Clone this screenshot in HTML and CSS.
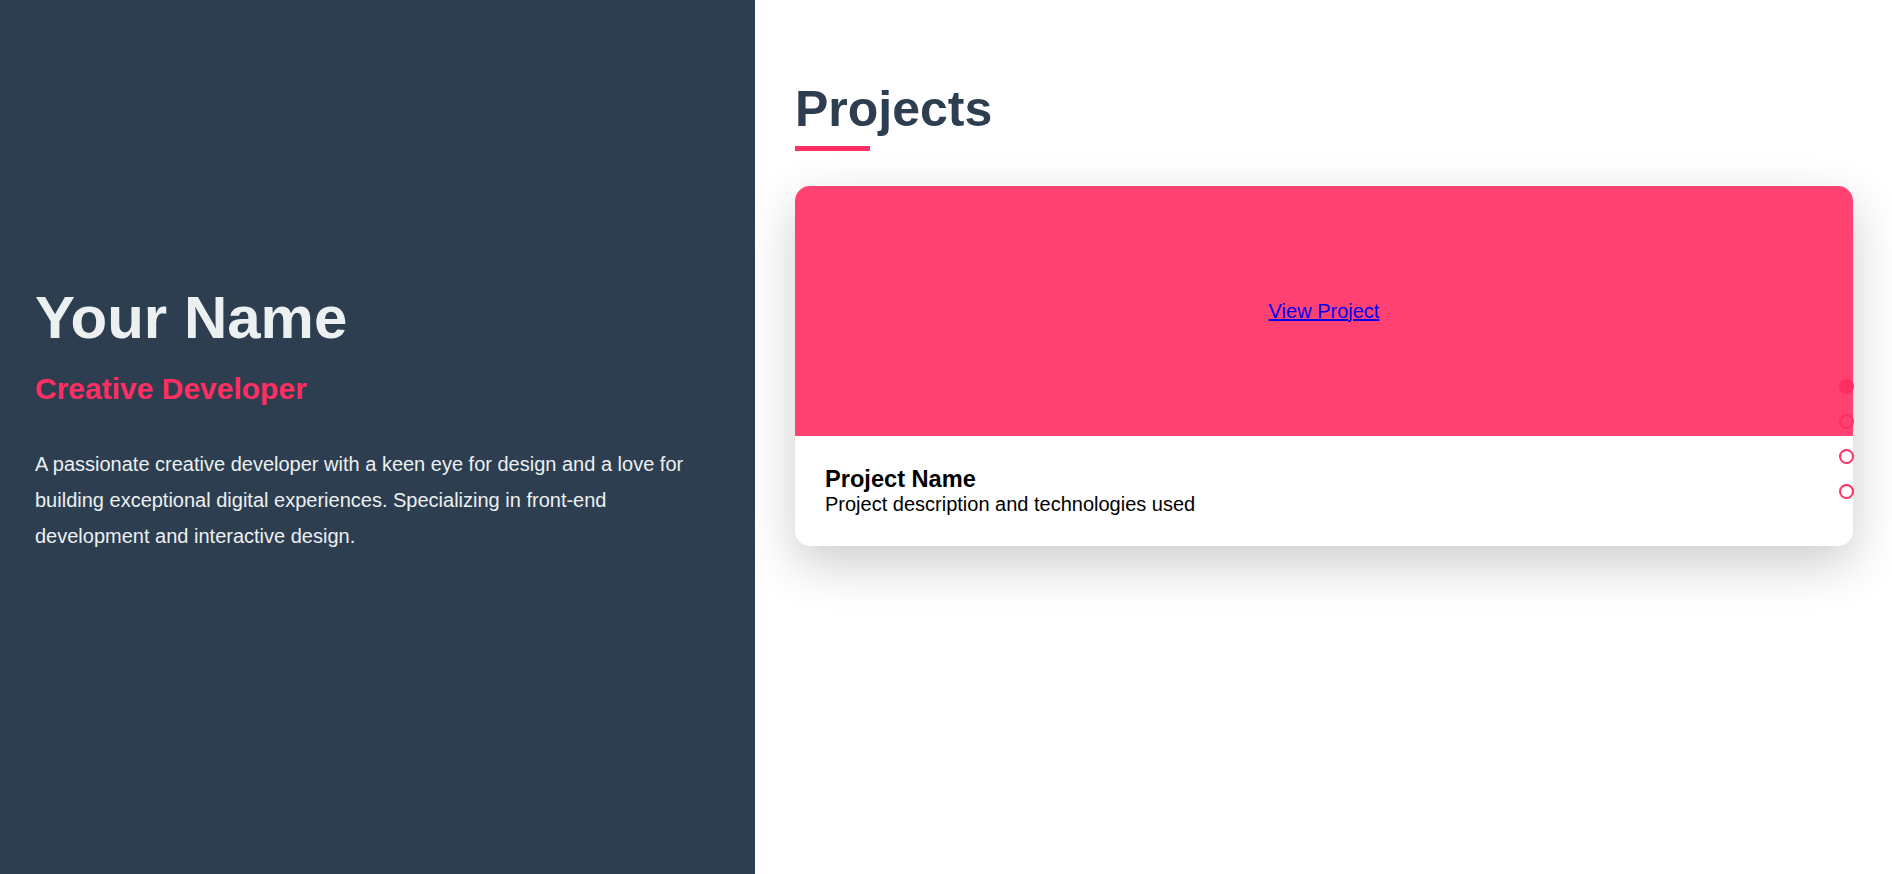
FILE: index.html
```html
<!DOCTYPE html>
<html lang="en">
<head>
<meta charset="utf-8">
<title>Your Name - Portfolio</title>
<link rel="stylesheet" href="styles.css">
</head>
<body>
<div class="layout">
  <aside class="intro">
    <h1 class="intro-name">Your Name</h1>
    <h2 class="intro-role">Creative Developer</h2>
    <p class="intro-text">A passionate creative developer with a keen eye for design and a love for building exceptional digital experiences. Specializing in front-end development and interactive design.</p>
  </aside>
  <main class="projects">
    <h2 class="projects-title">Projects</h2>
    <div class="projects-rule"></div>
    <article class="card">
      <div class="card-media"><a href="#" class="card-link">View Project</a></div>
      <div class="card-body">
        <h3 class="card-title">Project Name</h3>
        <p class="card-desc">Project description and technologies used</p>
      </div>
    </article>
  </main>
</div>
<nav class="dots">
  <span class="dot dot-active"></span>
  <span class="dot"></span>
  <span class="dot"></span>
  <span class="dot"></span>
</nav>
</body>
</html>
```
FILE: styles.css
```css
html, body {
  margin: 0;
  padding: 0;
  height: 100%;
}
body {
  font-family: "Liberation Sans", Arial, sans-serif;
  background: #ffffff;
  overflow: hidden;
}
.layout {
  display: flex;
  height: 874px;
}
.intro {
  width: 755px;
  flex: none;
  box-sizing: border-box;
  background: #2d3e50;
  padding: 0 35px;
  display: flex;
  flex-direction: column;
  justify-content: center;
  color: #ecf0f1;
}
.intro-name {
  margin: 0;
  font-size: 60px;
  line-height: 1.2;
  font-weight: 700;
  color: #ecf0f1;
}
.intro-role {
  margin: 17px 0 0;
  font-size: 30px;
  line-height: 1.2;
  font-weight: 700;
  color: #ff2e63;
}
.intro-text {
  margin: 39px 0 38px;
  font-size: 20px;
  line-height: 1.8;
  color: #ecf0f1;
}
.projects {
  flex: 1;
  box-sizing: border-box;
  padding: 79px 39px 40px 40px;
}
.projects-title {
  margin: 0;
  font-size: 50px;
  line-height: 1.2;
  font-weight: 700;
  color: #2c3e50;
}
.projects-rule {
  margin-top: 7px;
  width: 75px;
  height: 5px;
  background: #ff2e63;
}
.card {
  margin-top: 35px;
  border-radius: 15px;
  overflow: hidden;
  background: #ffffff;
  box-shadow: 0 18px 50px rgba(0, 0, 0, 0.2);
}
.card-media {
  height: 250px;
  background: rgba(255, 46, 99, 0.9);
  display: flex;
  align-items: center;
  justify-content: center;
}
.card-link {
  font-size: 20px;
  color: #0000ee;
  text-decoration: underline;
}
.card-body {
  padding: 30px 30px 29.5px;
}
.card-title {
  margin: 0;
  font-size: 23.6px;
  line-height: 1.15;
  font-weight: 700;
  color: #000000;
}
.card-desc {
  margin: 0;
  font-size: 20px;
  line-height: 1.15;
  color: #000000;
}
.dots {
  position: fixed;
  right: 38px;
  top: calc(50% + 2px);
  transform: translateY(-50%);
  display: flex;
  flex-direction: column;
  gap: 20px;
  z-index: 5;
}
.dot {
  display: block;
  width: 15px;
  height: 15px;
  box-sizing: border-box;
  border-radius: 50%;
  border: 2px solid #ff2e63;
}
.dot-active {
  background: #ff2e63;
}
```
